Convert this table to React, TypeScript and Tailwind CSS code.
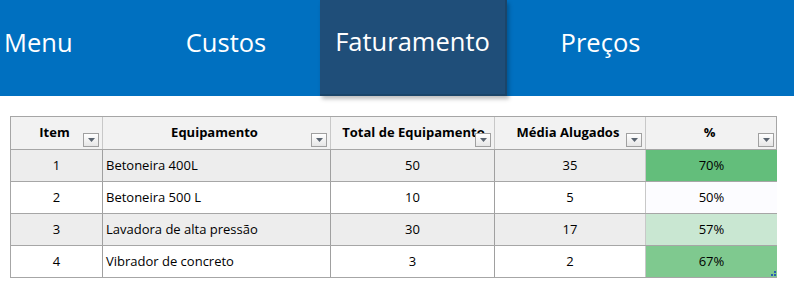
import React from "react";

const NAV = [
  { label: "Menu", className: "w-[132px] pl-[4px] justify-start" },
  { label: "Custos", className: "w-[188px] justify-center" },
  { label: "Faturamento", className: "w-[187px] justify-center", active: true },
  { label: "Preços", className: "w-[187px] justify-center" },
];

const ROWS = [
  { item: 1, nome: "Betoneira 400L", total: 50, media: 35, pct: "70%", bg: "bg-[#ededed]", pctBg: "bg-[#63be7b]" },
  { item: 2, nome: "Betoneira 500 L", total: 10, media: 5, pct: "50%", bg: "bg-white", pctBg: "bg-[#fcfcff]" },
  { item: 3, nome: "Lavadora de alta pressão", total: 30, media: 17, pct: "57%", bg: "bg-[#ededed]", pctBg: "bg-[#c9e7d2]" },
  { item: 4, nome: "Vibrador de concreto", total: 3, media: 2, pct: "67%", bg: "bg-white", pctBg: "bg-[#7fc98f]" },
];

const HEADERS = ["Item", "Equipamento", "Total de Equipamento", "Média Alugados", "%"];

function FilterButton() {
  return (
    <div className="absolute right-[3px] bottom-[2px] flex h-[14px] w-[16px] items-center justify-center border border-[#a0a0a0] bg-gradient-to-b from-[#ffffff] to-[#e6e6e6]">
      <svg width="7" height="4" viewBox="0 0 7 4">
        <path d="M0 0h7L3.5 4z" fill="#5a6470" />
      </svg>
    </div>
  );
}

export default function App() {
  const cols = "grid-cols-[92px_228px_164px_151px_131px]";
  return (
    <div className="h-[291px] w-[794px] overflow-hidden bg-white" style={{ fontFamily: "'Open Sans', sans-serif" }}>
      <nav className="flex h-[96px] bg-[#0070c0] text-[25.5px] text-white">
        {NAV.map((n) => (
          <div
            key={n.label}
            className={`flex h-full items-center pb-[12px] ${n.className} ${
              n.active ? "relative z-10 border-r-2 border-b-2 border-[#1b4569] bg-[#1f4e79] shadow-[2px_3px_4px_rgba(0,0,0,0.25)]" : ""
            }`}
          >
            {n.label}
          </div>
        ))}
      </nav>

      <div className="ml-[10px] mt-[20px] w-[767px] border border-[#a6a6a6] text-[13px] text-black">
        <div className={`grid ${cols} h-[32px] bg-[#f2f2f2] font-bold`}>
          {HEADERS.map((h, i) => (
            <div
              key={h}
              className={`relative flex items-center justify-center overflow-hidden whitespace-nowrap ${
                i < 4 ? "border-r border-[#c8c8c8]" : ""
              }`}
            >
              <span className={i === 2 ? "pl-[2px]" : "pr-[4px]"}>{h}</span>
              <FilterButton />
            </div>
          ))}
        </div>
        {ROWS.map((r, idx) => (
          <div key={r.item} className={`grid ${cols} h-[32px] border-t border-[#a6a6a6] ${r.bg}`}>
            <div className="flex items-center justify-center border-r border-[#a0a0a0]">{r.item}</div>
            <div className="flex items-center border-r border-[#a0a0a0] pl-[3px]">{r.nome}</div>
            <div className="flex items-center justify-center border-r border-[#a0a0a0]">{r.total}</div>
            <div className="flex items-center justify-center border-r border-[#c8c8c8]">{r.media}</div>
            <div className={`relative flex items-center justify-center ${r.pctBg}`}>
              {r.pct}
              {idx === ROWS.length - 1 && (
                <svg className="absolute right-[1px] bottom-[1px]" width="5" height="5" viewBox="0 0 5 5">
                  <rect x="3" y="0" width="2" height="2" fill="#2a5db0" />
                  <rect x="0" y="3" width="2" height="2" fill="#2a5db0" />
                  <rect x="3" y="3" width="2" height="2" fill="#2a5db0" />
                </svg>
              )}
            </div>
          </div>
        ))}
      </div>
    </div>
  );
}
